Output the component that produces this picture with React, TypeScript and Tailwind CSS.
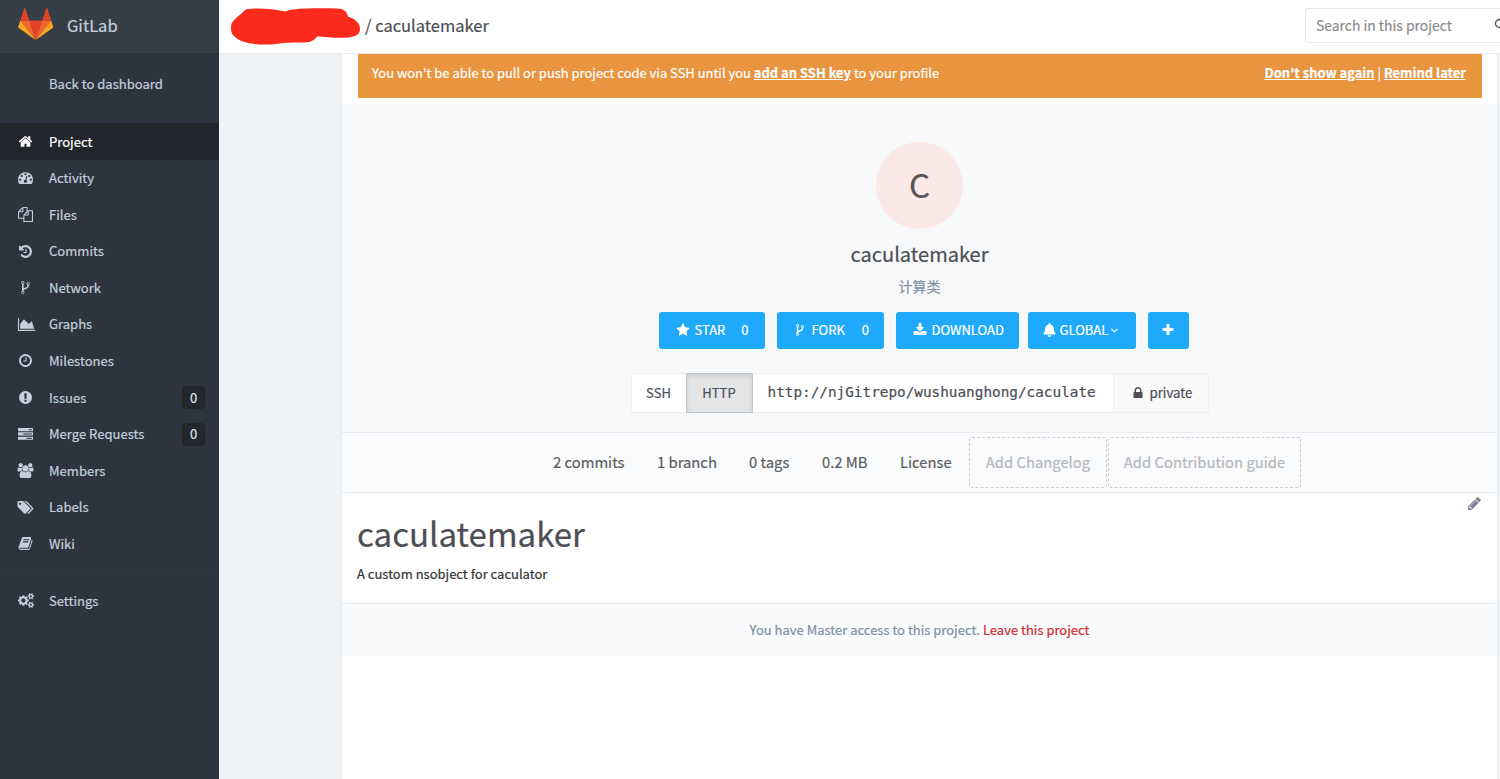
import { ChevronDown, Search } from 'lucide-react';
import { FaBell } from 'react-icons/fa';

const icons = {
  home: 'M1472 992v480q0 26-19 45t-45 19h-384v-384h-256v384h-384q-26 0-45-19t-19-45v-480q0-1 .5-3t.5-3l575-474 575 474q1 2 1 6zm223-69l-62 74q-8 9-21 11h-3q-13 0-21-7l-692-577-692 577q-12 8-24 7-13-2-21-11l-62-74q-8-10-7-23.5t11-21.5l719-599q32-26 76-26t76 26l244 204v-195q0-14 9-23t23-9h192q14 0 23 9t9 23v408l219 182q10 8 11 21.5t-7 23.5z',
  activity: 'M384 1152q0-53-37.5-90.5t-90.5-37.5-90.5 37.5-37.5 90.5 37.5 90.5 90.5 37.5 90.5-37.5 37.5-90.5zm192-448q0-53-37.5-90.5t-90.5-37.5-90.5 37.5-37.5 90.5 37.5 90.5 90.5 37.5 90.5-37.5 37.5-90.5zm428 481l101-382q6-26-7.5-48.5t-38.5-29.5-48 6.5-30 39.5l-101 382q-60 5-107 43.5t-63 98.5q-20 77 20 146t117 89 146-20 89-117q16-60-6-117t-72-91zm660-33q0-53-37.5-90.5t-90.5-37.5-90.5 37.5-37.5 90.5 37.5 90.5 90.5 37.5 90.5-37.5 37.5-90.5zm-640-640q0-53-37.5-90.5t-90.5-37.5-90.5 37.5-37.5 90.5 37.5 90.5 90.5 37.5 90.5-37.5 37.5-90.5zm448 192q0-53-37.5-90.5t-90.5-37.5-90.5 37.5-37.5 90.5 37.5 90.5 90.5 37.5 90.5-37.5 37.5-90.5zm320 448q0 261-141 483-19 29-54 29h-1402q-35 0-54-29-141-221-141-483 0-182 71-348t191-286 286-191 348-71 348 71 286 191 191 286 71 348z',
  files: 'M1696 384q40 0 68 28t28 68v1216q0 40-28 68t-68 28h-960q-40 0-68-28t-28-68v-288h-544q-40 0-68-28t-28-68v-672q0-40 20-88t48-76l408-408q28-28 76-48t88-20h416q40 0 68 28t28 68v328q68-40 128-40h416zm-544 213l-299 299h299v-299zm-640-384l-299 299h299v-299zm196 647l316-316v-416h-384v416q0 40-28 68t-68 28h-416v640h512v-256q0-40 20-88t48-76zm956 804v-1152h-384v416q0 40-28 68t-68 28h-416v640h896z',
  history: 'M1664 896q0 156-61 298t-164 245-245 164-298 61q-172 0-327-72.5t-264-204.5q-7-10-6.5-22.5t8.5-20.5l137-138q10-9 25-9 16 2 23 12 73 95 179 147t225 52q104 0 198.5-40.5t163.5-109.5 109.5-163.5 40.5-198.5-40.5-198.5-109.5-163.5-163.5-109.5-198.5-40.5q-98 0-188 35.5t-160 101.5l137 138q31 30 14 69-17 40-59 40h-448q-26 0-45-19t-19-45v-448q0-42 40-59 39-17 69 14l130 129q107-101 244.5-156.5t284.5-55.5q156 0 298 61t245 164 164 245 61 298zm-640-288v448q0 14-9 23t-23 9h-320q-14 0-23-9t-9-23v-64q0-14 9-23t23-9h224v-352q0-14 9-23t23-9h64q14 0 23 9t9 23z',
  fork: 'M672 1472q0-40-28-68t-68-28-68 28-28 68 28 68 68 28 68-28 28-68zm0-1152q0-40-28-68t-68-28-68 28-28 68 28 68 68 28 68-28 28-68zm640 128q0-40-28-68t-68-28-68 28-28 68 28 68 68 28 68-28 28-68zm96 0q0 52-26 96.5t-70 69.5q-2 287-226 414-67 38-203 81-128 40-169.5 71t-41.5 100v26q44 25 70 69.5t26 96.5q0 80-56 136t-136 56-136-56-56-136q0-52 26-96.5t70-69.5v-820q-44-25-70-69.5t-26-96.5q0-80 56-136t136-56 136 56 56 136q0 52-26 96.5t-70 69.5v497q54-26 154-57 55-17 87.5-29.5t70.5-31 59-39.5 40.5-51 28-69.5 8.5-91.5q-44-25-70-69.5t-26-96.5q0-80 56-136t136-56 136 56 56 136z',
  graph: 'M2048 1536v128h-2048v-1536h128v1408h1920zm-384-1024l256 896h-1664v-576l448-576 576 576z',
  clock: 'M1024 544v448q0 14-9 23t-23 9h-320q-14 0-23-9t-9-23v-64q0-14 9-23t23-9h224v-352q0-14 9-23t23-9h64q14 0 23 9t9 23zm416 352q0-148-73-273t-198-198-273-73-273 73-198 198-73 273 73 273 198 198 273 73 273-73 198-198 73-273zm224 0q0 209-103 385.5t-279.5 279.5-385.5 103-385.5-103-279.5-279.5-103-385.5 103-385.5 279.5-279.5 385.5-103 385.5 103 279.5 279.5 103 385.5z',
  issue: 'M896 128q209 0 385.5 103t279.5 279.5 103 385.5-103 385.5-279.5 279.5-385.5 103-385.5-103-279.5-279.5-103-385.5 103-385.5 279.5-279.5 385.5-103zm128 1247v-190q0-14-9-23.5t-22-9.5h-192q-13 0-23 10t-10 23v190q0 13 10 23t23 10h192q13 0 22-9.5t9-23.5zm-2-344l18-621q0-12-10-18-10-8-24-8h-220q-14 0-24 8-10 6-10 18l17 621q0 10 10 17.5t24 7.5h185q14 0 23.5-7.5t10.5-17.5z',
  tasks: 'M1024 1408h640v-128h-640v128zm-384-512h1024v-128h-1024v128zm640-512h384v-128h-384v128zm512 832v256q0 26-19 45t-45 19h-1664q-26 0-45-19t-19-45v-256q0-26 19-45t45-19h1664q26 0 45 19t19 45zm0-512v256q0 26-19 45t-45 19h-1664q-26 0-45-19t-19-45v-256q0-26 19-45t45-19h1664q26 0 45 19t19 45zm0-512v256q0 26-19 45t-45 19h-1664q-26 0-45-19t-19-45v-256q0-26 19-45t45-19h1664q26 0 45 19t19 45z',
  users: 'M529 896q-162 5-265 128h-134q-82 0-138-40.5t-56-118.5q0-353 124-353 6 0 43.5 21t97.5 42.5 119 21.5q67 0 133-23-5 37-5 66 0 139 81 256zm1071 637q0 120-73 189.5t-194 69.5h-874q-121 0-194-69.5t-73-189.5q0-53 3.5-103.5t14-109 26.5-108.5 43-97.5 62-81 85.5-53.5 111.5-20q10 0 43 21.5t73 48 107 48 135 21.5 135-21.5 107-48 73-48 43-21.5q61 0 111.5 20t85.5 53.5 62 81 43 97.5 26.5 108.5 14 109 3.5 103.5zm-1024-1277q0 106-75 181t-181 75-181-75-75-181 75-181 181-75 181 75 75 181zm704 384q0 159-112.5 271.5t-271.5 112.5-271.5-112.5-112.5-271.5 112.5-271.5 271.5-112.5 271.5 112.5 112.5 271.5zm576 225q0 78-56 118.5t-138 40.5h-134q-103-123-265-128 81-117 81-256 0-29-5-66 66 23 133 23 59 0 119-21.5t97.5-42.5 43.5-21q124 0 124 353zm-128-609q0 106-75 181t-181 75-181-75-75-181 75-181 181-75 181 75 75 181z',
  tags: 'M384 448q0-53-37.5-90.5t-90.5-37.5-90.5 37.5-37.5 90.5 37.5 90.5 90.5 37.5 90.5-37.5 37.5-90.5zm1067 576q0 53-37 90l-491 492q-39 37-91 37-53 0-90-37l-715-716q-38-37-64.5-101t-26.5-117v-416q0-52 38-90t90-38h416q53 0 117 26.5t102 64.5l715 714q37 39 37 91zm384 0q0 53-37 90l-491 492q-39 37-91 37-36 0-59-14t-53-45l470-470q37-37 37-90 0-52-37-91l-715-714q-38-38-102-64.5t-117-26.5h224q53 0 117 26.5t102 64.5l715 714q37 39 37 91z',
  book: 'M1703 478q40 57 18 129l-275 906q-19 64-76.5 107.5t-122.5 43.5h-923q-77 0-148.5-53.5t-99.5-131.5q-24-67-2-127 0-4 3-27t4-37q1-8-3-21.5t-3-19.5q2-11 8-21t16.5-23.5 16.5-23.5q23-38 45-91.5t30-91.5q3-10 .5-30t-.5-28q3-11 17-28t17-23q21-36 42-92t25-90q1-9-2.5-32t.5-28q4-13 22-30.5t22-22.5q19-26 42.5-84.5t27.5-96.5q1-8-3-25.5t-2-26.5q2-8 9-18t18-23 17-21q8-12 16.5-30.5t15-35 16-36 19.5-32 26.5-23.5 36-11.5 47.5 5.5l-1 3q38-9 51-9h761q74 0 114 56t18 130l-274 906q-36 119-71.5 153.5t-128.5 34.5h-869q-27 0-38 15-11 16-1 43 24 70 144 70h923q29 0 56-15.5t35-41.5l300-987q7-22 5-57 38 15 59 43zm-1064 2q-4 13 2 22.5t20 9.5h608q13 0 25.5-9.5t16.5-22.5l21-64q4-13-2-22.5t-20-9.5h-608q-13 0-25.5 9.5t-16.5 22.5zm-83 256q-4 13 2 22.5t20 9.5h608q13 0 25.5-9.5t16.5-22.5l21-64q4-13-2-22.5t-20-9.5h-608q-13 0-25.5 9.5t-16.5 22.5z',
  cogs: 'M896 896q0-106-75-181t-181-75-181 75-75 181 75 181 181 75 181-75 75-181zm768 512q0-52-38-90t-90-38-90 38-38 90q0 53 37.5 90.5t90.5 37.5 90.5-37.5 37.5-90.5zm0-1024q0-52-38-90t-90-38-90 38-38 90q0 53 37.5 90.5t90.5 37.5 90.5-37.5 37.5-90.5zm-384 421v185q0 10-7 19.5t-16 10.5l-155 24q-11 35-32 76 34 48 90 115 7 11 7 20 0 12-7 19-23 30-82.5 89.5t-78.5 59.5q-11 0-21-7l-115-90q-37 19-77 31-11 108-23 155-7 24-30 24h-186q-11 0-20-7.5t-10-17.5l-23-153q-34-10-75-31l-118 89q-7 7-20 7-11 0-21-8-144-133-144-160 0-9 7-19 10-14 41-53t47-61q-23-44-35-82l-152-24q-10-1-17-9.5t-7-19.5v-185q0-10 7-19.5t16-10.5l155-24q11-35 32-76-34-48-90-115-7-11-7-20 0-12 7-20 22-30 82-89t79-59q11 0 21 7l115 90q34-18 77-32 11-108 23-154 7-24 30-24h186q11 0 20 7.5t10 17.5l23 153q34 10 75 31l118-89q8-7 20-7 11 0 21 8 144 133 144 160 0 8-7 19-12 16-42 54t-45 60q23 48 34 82l152 23q10 2 17 10.5t7 19.5zm640 533v140q0 16-149 31-12 27-30 52 51 113 51 138 0 4-4 7-122 71-124 71-8 0-46-47t-52-68q-20 2-30 2t-30-2q-14 21-52 68t-46 47q-2 0-124-71-4-3-4-7 0-25 51-138-18-25-30-52-149-15-149-31v-140q0-16 149-31 13-29 30-52-51-113-51-138 0-4 4-7 4-2 35-20t59-34 30-16q8 0 46 46.5t52 67.5q20-2 30-2t30 2q51-71 92-112l6-2q4 0 124 70 4 3 4 7 0 25-51 138 17 23 30 52 149 15 149 31zm0-1024v140q0 16-149 31-12 27-30 52 51 113 51 138 0 4-4 7-122 71-124 71-8 0-46-47t-52-68q-20 2-30 2t-30-2q-14 21-52 68t-46 47q-2 0-124-71-4-3-4-7 0-25 51-138-18-25-30-52-149-15-149-31v-140q0-16 149-31 13-29 30-52-51-113-51-138 0-4 4-7 4-2 35-20t59-34 30-16q8 0 46 46.5t52 67.5q20-2 30-2t30 2q51-71 92-112l6-2q4 0 124 70 4 3 4 7 0 25-51 138 17 23 30 52 149 15 149 31z',
  star: 'M1728 647q0 22-26 48l-363 354 86 500q1 7 1 20 0 21-10.5 35.5t-30.5 14.5q-19 0-40-12l-449-236-449 236q-22 12-40 12-21 0-31.5-14.5t-10.5-35.5q0-6 2-20l86-500-364-354q-25-27-25-48 0-37 56-46l502-73 225-455q19-41 49-41t49 41l225 455 502 73q56 9 56 46z',
  download: 'M1344 1344q0-26-19-45t-45-19-45 19-19 45 19 45 45 19 45-19 19-45zm256 0q0-26-19-45t-45-19-45 19-19 45 19 45 45 19 45-19 19-45zm128-224v320q0 40-28 68t-68 28h-1472q-40 0-68-28t-28-68v-320q0-40 28-68t68-28h465l135 136q58 56 136 56t136-56l136-136h464q40 0 68 28t28 68zm-325-569q17 41-14 70l-448 448q-18 19-45 19t-45-19l-448-448q-31-29-14-70 17-39 59-39h256v-448q0-26 19-45t45-19h256q26 0 45 19t19 45v448h256q42 0 59 39z',
  plus: 'M1600 736v192q0 40-28 68t-68 28h-416v416q0 40-28 68t-68 28h-192q-40 0-68-28t-28-68v-416h-416q-40 0-68-28t-28-68v-192q0-40 28-68t68-28h416v-416q0-40 28-68t68-28h192q40 0 68 28t28 68v416h416q40 0 68 28t28 68z',
  lock: 'M640 768h512v-192q0-106-75-181t-181-75-181 75-75 181v192zm832 96v576q0 40-28 68t-68 28h-960q-40 0-68-28t-28-68v-576q0-40 28-68t68-28h32v-192q0-184 132-316t316-132 316 132 132 316v192h32q40 0 68 28t28 68z',
  pencil: 'M491 1536l91-91-235-235-91 91v107h128v128h107zm523-928q0-22-22-22-10 0-17 7l-542 542q-7 7-7 17 0 22 22 22 10 0 17-7l542-542q7-7 7-17zm-54-192l416 416-832 832h-416v-416zm683 96q0 53-37 90l-166 166-416-416 166-165q36-38 90-38 53 0 91 38l235 234q37 39 37 91z',
};

type IconName = keyof typeof icons;

function Icon({ name, className }: { name: IconName; className?: string }) {
  return (
    <svg viewBox="0 0 1792 1792" fill="currentColor" className={`overflow-visible shrink-0 ${className ?? ''}`}>
      <path d={icons[name]} />
    </svg>
  );
}

const navItems: { icon: IconName; label: string; count?: number; active?: boolean }[] = [
  { icon: 'home', label: 'Project', active: true },
  { icon: 'activity', label: 'Activity' },
  { icon: 'files', label: 'Files' },
  { icon: 'history', label: 'Commits' },
  { icon: 'fork', label: 'Network' },
  { icon: 'graph', label: 'Graphs' },
  { icon: 'clock', label: 'Milestones' },
  { icon: 'issue', label: 'Issues', count: 0 },
  { icon: 'tasks', label: 'Merge Requests', count: 0 },
  { icon: 'users', label: 'Members' },
  { icon: 'tags', label: 'Labels' },
  { icon: 'book', label: 'Wiki' },
];

function Sidebar() {
  return (
    <aside className="w-[219px] shrink-0 bg-[#2d343f] text-[#c5d0de]">
      <div className="flex h-[53px] items-center bg-[#353e47] pl-[18px]">
        <svg viewBox="0 0 36 33" className="h-[33px] w-[36px] -mt-1">
          <path d="M17.700 32L11.300 12.500h13z" fill="#e24329" />
          <path d="M17.700 32L11.300 12.500h-9z" fill="#f2652b" />
          <path d="M2.300 12.500L.3 18.600c-.2.6 0 1.100.5 1.500L17.700 32z" fill="#fca326" />
          <path d="M2.300 12.500h9L7.300.6c-.2-.6-1-.6-1.200 0z" fill="#e24329" />
          <path d="M17.700 32l6.500-19.500h9z" fill="#f2652b" />
          <path d="M33.200 12.500l2 6.100c.2.6 0 1.100-.5 1.500L17.700 32z" fill="#fca326" />
          <path d="M33.200 12.500h-9L28.200.6c.2-.6 1-.6 1.200 0z" fill="#e24329" />
        </svg>
        <span className="ml-[13px] -mt-0.5 text-[16.500px] leading-none">GitLab</span>
      </div>

      <div className="flex h-[70px] items-center pl-[49px] pb-2 text-[13.050px]">Back to dashboard</div>

      <nav className="text-[13.050px]">
        {navItems.map((item) => (
          <div
            key={item.label}
            className={`flex h-[36.600px] items-center pl-[18px] pr-[14px] ${item.active ? 'bg-[#23272d] text-white' : ''}`}
          >
            <Icon name={item.icon} className="h-[15px] w-[15px]" />
            <span className="ml-4">{item.label}</span>
            {item.count !== undefined && (
              <span className="ml-auto flex h-[23px] w-[23px] items-center justify-center rounded bg-[#23272d] text-[13px] text-[#dde3ea]">
                {item.count}
              </span>
            )}
          </div>
        ))}
        <div className="mt-2.5 border-t border-[#2f3742] pt-[9px]">
          <div className="flex h-[36.600px] items-center pl-[18px]">
            <Icon name="cogs" className="h-[15px] w-[15px]" />
            <span className="ml-4">Settings</span>
          </div>
        </div>
      </nav>
    </aside>
  );
}

function Header() {
  return (
    <header className="flex h-[54px] items-center border-b border-[#e7e9ed] bg-white pl-3">
      {/* Hidden group name */}
      <svg viewBox="0 0 129 38" className="h-[38px] w-[129px] shrink-0" fill="#fc2a1c">
        <path d="M17 1C28-.5 43 1 54 3.500 65-.5 88 .3 106 .5c7 0 10 3 11 8 7 2 12 7 12 12 0 6-4 8-12 9-10 1-22-.5-31-1-3 5-8 6-16 6-9 0-17 .2-27 1.800C26 37.500 10 35 4 29 0 26 0 22 0 18 1 12 8 8 11 5c2-2 3-3.500 6-4z" />
      </svg>
      <h1 className="-mt-[3px] ml-[5px] text-[16.500px] leading-none text-[#4c4e54]">/ caculatemaker</h1>
      <div className="ml-auto flex h-[35px] w-[195px] items-center overflow-hidden rounded-l-[3px] border border-r-0 border-[#e7e9ed] -mt-0.5 pl-2.5 text-[#8c8c8c]">
        <span className="w-[178px] shrink-0 text-[13.900px]">Search in this project</span>
        <Search className="-mt-1 h-[12px] w-[12px] shrink-0 text-[#555]" strokeWidth={3} />
      </div>
    </header>
  );
}

function ProjectHome() {
  return (
    <section className="flex h-[329px] flex-col items-center border-b border-[#e9ebef] bg-[#f7f8fa] pt-[38px]">
      <div className="flex h-[87px] w-[87px] items-center justify-center rounded-full bg-[#fbe9e7] pb-[3px] text-[33px] leading-none text-[#555]">
        C
      </div>
      <h2 className="mt-[10px] text-[20px] leading-[30px] text-[#4c4e54]">caculatemaker</h2>
      <p className="mt-[7px] text-[14px] leading-5 text-[#7f8fa4]">计算类</p>

      <div className="ml-2 mt-4 flex h-[37px] text-[13px] text-white">
        <button className="flex w-[106px] items-center rounded-[3px] bg-[#1fa9fb] pl-[17px] pb-px">
          <Icon name="star" className="h-[14px] w-[14px]" />
          <span className="ml-[5px]">STAR</span>
          <span className="ml-4">0</span>
        </button>
        <button className="ml-3 flex w-[107px] items-center rounded-[3px] bg-[#1fa9fb] pl-4 pb-px">
          <Icon name="fork" className="h-[14px] w-[14px]" />
          <span className="ml-[5px]">FORK</span>
          <span className="ml-[17px]">0</span>
        </button>
        <button className="ml-3 flex w-[123px] items-center rounded-[3px] bg-[#1fa9fb] pl-[17px] pb-px">
          <Icon name="download" className="h-[14px] w-[14px]" />
          <span className="ml-[5px]">DOWNLOAD</span>
        </button>
        <button className="ml-[9px] flex w-[108px] items-center rounded-[3px] bg-[#1fa9fb] pl-[15px] pb-px">
          <FaBell className="h-[14px] w-[13px]" />
          <span className="ml-1">GLOBAL</span>
          <ChevronDown className="ml-px h-[11px] w-[11px]" strokeWidth={2.5} />
        </button>
        <button className="ml-3 flex w-[41px] items-center justify-center rounded-[3px] bg-[#1fa9fb] pb-px">
          <Icon name="plus" className="h-[14px] w-[14px]" />
        </button>
      </div>

      <div className="mt-6 flex h-10 w-[578px] border border-[#eceef1] bg-white text-[13.200px] text-[#4c4e54]">
        <div className="flex w-[54px] items-center justify-center pb-px text-[13px]">SSH</div>
        <div className="-my-px flex w-[67px] items-center justify-center border border-[#c3c6ca] bg-[#e4e5e7] pb-px text-[13px] shadow-[inset_0_2px_4px_rgba(0,0,0,0.12)]">
          HTTP
        </div>
        <div className="flex w-[360px] items-center pb-px pl-[15px] pr-[15px] font-['DejaVu_Sans_Mono',monospace] text-[14.350px]">
          <span className="overflow-hidden whitespace-nowrap">http://njGitrepo/wushuanghong/caculate</span>
        </div>
        <div className="flex flex-1 items-center border-l border-[#eceef1] bg-[#f8f8f9] pb-px pl-[17px]">
          <Icon name="lock" className="h-[14px] w-[14px]" />
          <span className="ml-[5px]">private</span>
        </div>
      </div>
    </section>
  );
}

function ProjectStats() {
  return (
    <section className="flex h-[60px] items-center border-b border-[#e9ebef] bg-[#fafbfd] pl-[211px] text-[14.800px] whitespace-nowrap text-[#5c5d5e]">
      <span className="w-[104px]">2 commits</span>
      <span className="w-[92px]">1 branch</span>
      <span className="w-[73px]">0 tags</span>
      <span className="w-[78px]">0.2 MB</span>
      <span className="w-[69px]">License</span>
      <span className="flex h-[51px] w-[138px] items-center justify-center rounded-[3px] border border-dashed border-[#ccc] text-[#b5b7ba]">
        Add Changelog
      </span>
      <span className="ml-px flex h-[51px] w-[193px] items-center justify-center rounded-[3px] border border-dashed border-[#ccc] text-[#b5b7ba]">
        Add Contribution guide
      </span>
    </section>
  );
}

export default function App() {
  return (
    <div className="flex h-[779px] w-[1500px] overflow-hidden bg-[#eff3f6] font-['Noto_Sans_CJK_SC',sans-serif] [-webkit-text-stroke:0.2px]">
      <Sidebar />
      <div className="flex flex-1 flex-col">
        <Header />
        <main className="ml-[122px] mr-[2px] flex-1 border-x border-[#e7e9ed] bg-white">
          <div className="mr-[15px] mb-1.5 ml-4 flex h-[44px] items-start justify-between bg-[#e9943f] pr-4 pl-[14px] pt-[9px] text-[12.960px] leading-5 text-white">
            <p>
              You won't be able to pull or push project code via SSH until you{' '}
              <a className="font-bold underline">add an SSH key</a> to your profile
            </p>
            <p>
              <a className="font-bold underline">Don't show again</a> | <a className="font-bold underline">Remind later</a>
            </p>
          </div>

          <ProjectHome />
          <ProjectStats />

          {/* Readme */}
          <section className="flex h-[111px] justify-between border-b border-[#e9ebef] pl-[15px] pr-[15px]">
            <div>
              <h1 className="mt-4 text-[33.100px] leading-[48px] text-[#4c4e54]">caculatemaker</h1>
              <p className="mt-[7px] text-[13px] leading-5 text-[#333]">A custom nsobject for caculator</p>
            </div>
            <Icon name="pencil" className="mt-[3px] h-[15px] w-[15px] text-[#7d8196]" />
          </section>

          <footer className="flex h-[52px] items-center justify-center gap-[3px] bg-[#f9fafc] text-[13px] text-[#7f8fa4]">
            <span>You have Master access to this project.</span>
            <a className="text-[#d22c2c]">Leave this project</a>
          </footer>
        </main>
      </div>
    </div>
  );
}
